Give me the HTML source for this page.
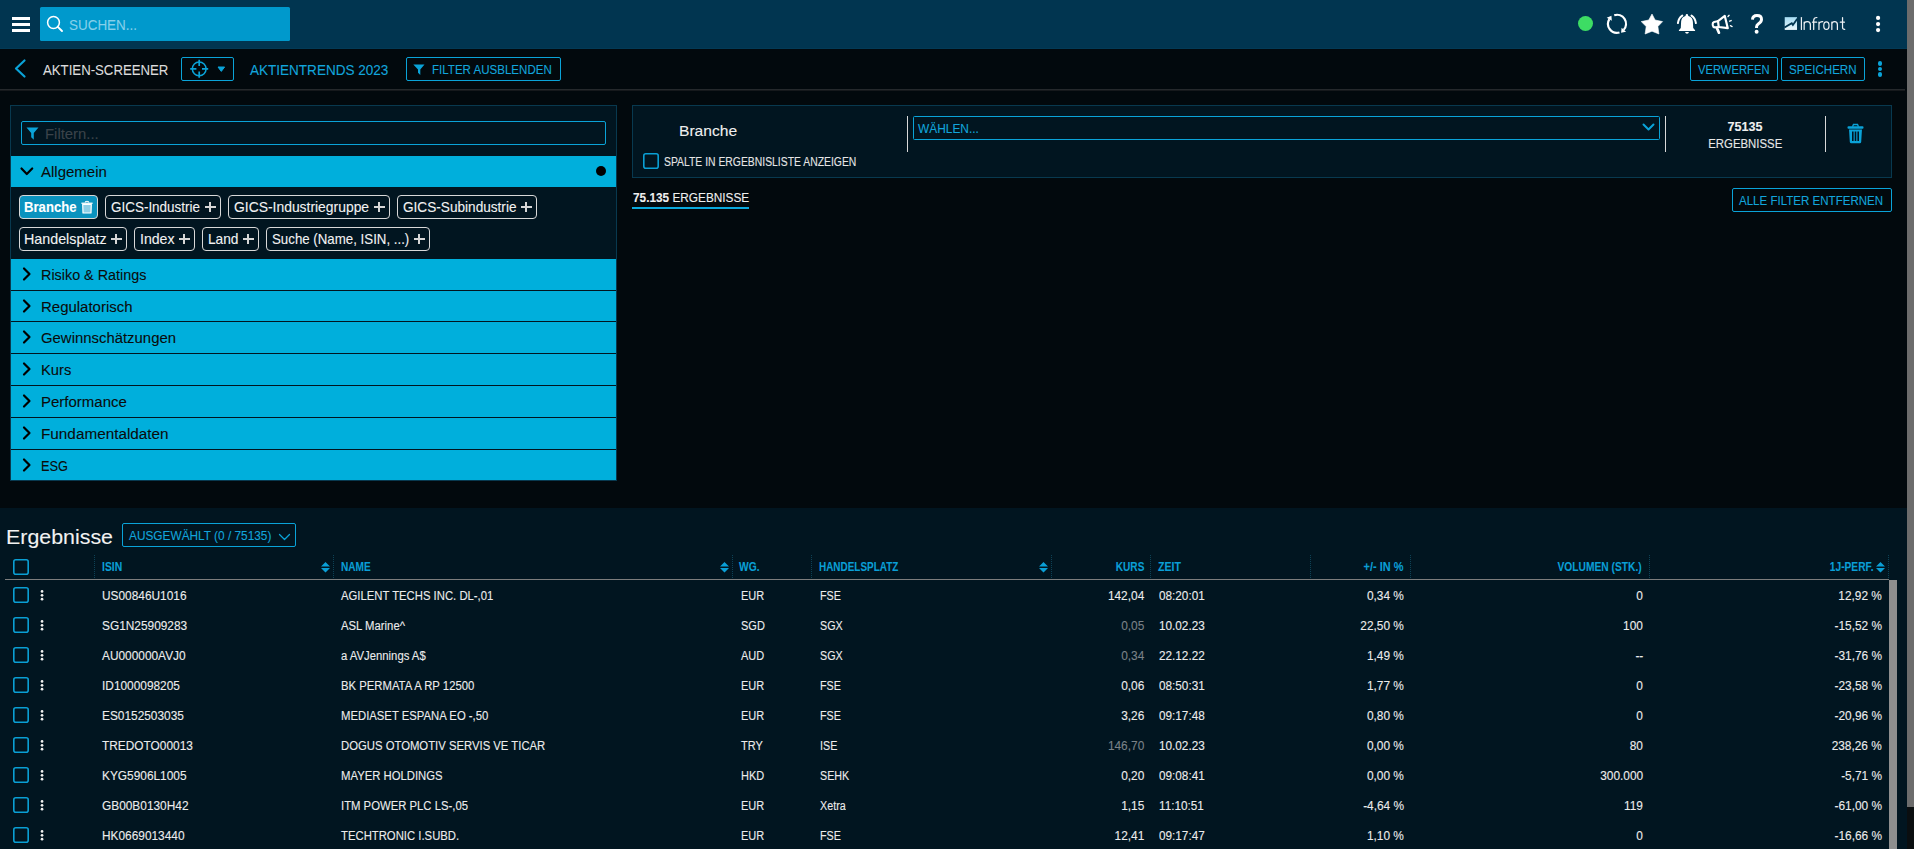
<!DOCTYPE html>
<html><head><meta charset="utf-8"><style>
html,body{margin:0;padding:0;}
body{width:1914px;height:849px;overflow:hidden;position:relative;background:#02090d;font-family:"Liberation Sans", sans-serif;}
.t{position:absolute;white-space:nowrap;-webkit-text-stroke:0.1px currentColor;}
svg{overflow:visible}
</style></head><body>
<div style="position:absolute;left:0px;top:0px;width:1907px;height:48px;background:#013550"></div>
<div style="position:absolute;left:0px;top:48px;width:1907px;height:1px;background:#033a56"></div>
<div style="position:absolute;left:12px;top:16.5px;width:18px;height:3px;background:#fff"></div>
<div style="position:absolute;left:12px;top:22.5px;width:18px;height:3px;background:#fff"></div>
<div style="position:absolute;left:12px;top:28.5px;width:18px;height:3px;background:#fff"></div>
<div style="position:absolute;left:40px;top:7px;width:250px;height:34px;background:#0099cc;border-radius:1.5px"></div>
<svg style="position:absolute;left:46px;top:15px" width="18" height="18" viewBox="0 0 18 18"><circle cx="7.5" cy="7.5" r="5.9" fill="none" stroke="#fff" stroke-width="1.5"/><line x1="11.8" y1="11.8" x2="16" y2="16" stroke="#fff" stroke-width="1.9" stroke-linecap="round"/></svg>
<div class="t" style="left:69.4px;transform-origin:left 13px;top:17.00px;font-size:16px;line-height:16px;color:#86d0ea;font-weight:400;transform:scale(0.8405,0.9167);">SUCHEN...</div>
<div style="position:absolute;left:1578px;top:16px;width:15px;height:15px;border-radius:50%;background:#3ddc64"></div>
<svg style="position:absolute;left:1606px;top:13px" width="22" height="22" viewBox="0 0 22 22"><path d="M8.22 2.29 A9.0 9.0 0 0 1 17.69 16.87 M13.48 19.50 A9.0 9.0 0 0 1 3.37 6.08" fill="none" stroke="#fff" stroke-width="2.2"/><path d="M15.08 19.77 L20.05 18.73 L15.59 14.72 Z M5.43 2.77 L0.72 4.66 L5.81 7.84 Z" fill="#fff"/></svg>
<svg style="position:absolute;left:1641px;top:14px" width="22" height="21" viewBox="0 0 22 21"><path d="M11 0 L14.1 6 L21.6 7.6 L16.9 12.55 L17.9 20 L11 17.2 L4.1 20 L5.2 12.55 L0.2 7.6 L7.76 6 Z" fill="#fff" stroke="#fff" stroke-width="0.6" stroke-linejoin="round"/></svg>
<svg style="position:absolute;left:1677px;top:13px" width="21" height="22" viewBox="0 0 21 22"><path d="M9.9 3 C6 3 4.3 5.6 4.1 9 L3.8 14.9 L1.9 17.3 L1.9 18 L18.1 18 L18.1 17.3 L16.2 14.9 L15.9 9 C15.7 5.6 14 3 9.9 3 Z" fill="#fff"/><path d="M8.7 4 L8.7 2.2 Q8.7 0.9 9.9 0.9 Q11.1 0.9 11.1 2.2 L11.1 4 Z" fill="#fff"/><path d="M8 19.1 L12 19.1 Q11.5 20.8 10 20.8 Q8.5 20.8 8 19.1 Z" fill="#fff"/><path d="M5.3 2.6 Q1.5 5.1 0.9 10.1 M14.5 2.6 Q18.3 5.1 18.9 10.1" fill="none" stroke="#fff" stroke-width="2" stroke-linecap="round"/></svg>
<svg style="position:absolute;left:1705px;top:8px" width="65" height="32" viewBox="0 0 1725 849"><g fill="none" stroke="#fff" stroke-linejoin="round" stroke-linecap="round"><path d="M345 345 L525 210 L605 535 L365 505 Z" stroke-width="58"/><path d="M330 350 L240 370 Q200 385 205 430 L212 470 Q222 520 270 515 L360 505" stroke-width="58"/><path d="M320 540 L370 655" stroke-width="72"/><path d="M610 225 L640 195 M655 350 L695 333 M675 470 L720 492" stroke-width="36"/><path d="M1260 310 Q1265 200 1380 200 Q1500 200 1500 300 Q1500 370 1420 420 Q1368 455 1368 500 L1368 530" stroke-width="78" stroke-linecap="butt"/></g><circle cx="1370" cy="628" r="52" fill="#fff"/></svg>
<svg style="position:absolute;left:1778px;top:10px" width="112" height="28" viewBox="0 0 1914 478"><defs><linearGradient id="lg" x1="0" y1="0" x2="0" y2="1"><stop offset="0" stop-color="#a6dcf3"/><stop offset="0.5" stop-color="#c5e8f7"/><stop offset="1" stop-color="#eef8fc"/></linearGradient></defs><rect x="115" y="122" width="210" height="218" fill="url(#lg)"/><path d="M110 300 L235 225 L255 255 L330 150" fill="none" stroke="#013550" stroke-width="32"/><g fill="none" stroke="#eef2f5" stroke-width="21" stroke-linecap="round"><path d="M400 128 L400 332"/><path d="M447 332 L447 205 M447 240 Q447 200 500 200 Q553 200 553 250 L553 332"/><path d="M610 332 L610 175 Q610 128 665 128 M590 208 L660 208"/><path d="M700 332 L700 205 M700 250 Q702 200 765 200"/><ellipse cx="827" cy="268" rx="45" ry="64"/><path d="M920 332 L920 205 M920 240 Q920 200 968 200 Q1015 200 1015 250 L1015 332"/><path d="M1103 128 L1103 300 Q1103 332 1140 332 M1065 208 L1135 208"/></g><circle cx="1710" cy="135" r="36" fill="#fff"/><circle cx="1710" cy="240" r="36" fill="#fff"/><circle cx="1710" cy="342" r="36" fill="#fff"/></svg>
<div style="position:absolute;left:0px;top:89px;width:1905px;height:1px;background:#25292c"></div>
<div style="position:absolute;left:0px;top:90px;width:1905px;height:1px;background:#16191c"></div>
<svg style="position:absolute;left:14px;top:59px" width="13" height="20" viewBox="0 0 13 20"><polyline points="10.5,1.5 2,9.5 10.5,17.5" fill="none" stroke="#0aa3d8" stroke-width="2.2" stroke-linecap="round" stroke-linejoin="round"/></svg>
<div class="t" style="left:43.3px;transform-origin:left 13px;top:62.00px;font-size:16px;line-height:16px;color:#dcdcdc;font-weight:400;transform:scale(0.8248,0.9167);">AKTIEN-SCREENER</div>
<div style="position:absolute;left:181px;top:57px;width:51px;height:22px;border:1px solid #0aa3d8;border-radius:2px"></div>
<svg style="position:absolute;left:189px;top:59px" width="21" height="20" viewBox="0 0 21 20"><circle cx="10.2" cy="9.8" r="6.9" fill="none" stroke="#0aa3d8" stroke-width="1.5"/><path d="M10.2 0.8 L10.2 7 M10.2 12.6 L10.2 18.8 M1.2 9.8 L7.4 9.8 M13 9.8 L19.2 9.8" stroke="#0aa3d8" stroke-width="1.7"/></svg>
<svg style="position:absolute;left:217px;top:66px" width="9" height="6" viewBox="0 0 9 6"><path d="M1 1 L7.6 1 L4.3 5.4 Z" fill="#0aa3d8" stroke="#0aa3d8" stroke-width="1" stroke-linejoin="round"/></svg>
<div class="t" style="left:250.3px;transform-origin:left 13px;top:62.00px;font-size:15.5px;line-height:15.5px;color:#12a5dc;font-weight:400;transform:scale(0.8726,1.0000);">AKTIENTRENDS 2023</div>
<div style="position:absolute;left:406px;top:57px;width:153px;height:22px;border:1px solid #0aa3d8;border-radius:2px"></div>
<svg style="position:absolute;left:413px;top:64px" width="12" height="12" viewBox="0 0 12 12"><path d="M0.3 0.5 L11.5 0.5 L7.3 5.6 L7.3 11 L5 8.8 L5 5.6 Z" fill="#0aa3d8"/></svg>
<div class="t" style="left:432.2px;transform-origin:left 11px;top:63.00px;font-size:13px;line-height:13px;color:#12a5dc;font-weight:400;transform:scale(0.8883,1.0000);">FILTER AUSBLENDEN</div>
<div style="position:absolute;left:1690px;top:57px;width:86px;height:22px;border:1px solid #0aa3d8;border-radius:2px"></div>
<div class="t" style="left:1697.7px;transform-origin:left 11px;top:63.00px;font-size:13px;line-height:13px;color:#12a5dc;font-weight:400;transform:scale(0.8632,1.0000);">VERWERFEN</div>
<div style="position:absolute;left:1781px;top:57px;width:82px;height:22px;border:1px solid #0aa3d8;border-radius:2px"></div>
<div class="t" style="left:1789px;transform-origin:left 11px;top:63.00px;font-size:13px;line-height:13px;color:#12a5dc;font-weight:400;transform:scale(0.8911,1.0000);">SPEICHERN</div>
<div style="position:absolute;left:1877.8px;top:61px;width:4.6px;height:4.6px;border-radius:50%;background:#0aa3d8"></div>
<div style="position:absolute;left:1877.8px;top:66.5px;width:4.6px;height:4.6px;border-radius:50%;background:#0aa3d8"></div>
<div style="position:absolute;left:1877.8px;top:72px;width:4.6px;height:4.6px;border-radius:50%;background:#0aa3d8"></div>
<div style="position:absolute;left:1907px;top:0px;width:7px;height:849px;background:#0a0e10"></div>
<div style="position:absolute;left:1907px;top:0px;width:7px;height:807px;background:#6c6c6c"></div>
<div style="position:absolute;left:10px;top:105px;width:605px;height:375px;background:#011520;border:1px solid #08394f;border-bottom:none"></div>
<div style="position:absolute;left:21px;top:121px;width:583px;height:22px;border:1px solid #0aa3d8;border-radius:2px"></div>
<svg style="position:absolute;left:26px;top:127px" width="13" height="13" viewBox="0 0 13 13"><path d="M0.5 0.5 L12.5 0.5 L7.8 6 L7.8 12.8 L5.2 10.3 L5.2 6 Z" fill="#0aa3d8"/></svg>
<div class="t" style="left:45px;transform-origin:left 13px;top:126.00px;font-size:16px;line-height:16px;color:#3b434a;font-weight:400;transform:scale(0.9291,0.9167);">Filtern...</div>
<div style="position:absolute;left:11px;top:156px;width:605px;height:31px;background:#00afdc"></div>
<svg style="position:absolute;left:20px;top:167px" width="14" height="10" viewBox="0 0 14 10"><polyline points="1.5,1.5 6.8,7 12.2,1.5" fill="none" stroke="#000" stroke-width="2.2" stroke-linecap="round" stroke-linejoin="round"/></svg>
<div class="t" style="left:40.5px;transform-origin:left 13px;top:164.00px;font-size:16px;line-height:16px;color:#0b0b0b;font-weight:400;transform:scale(0.9379,0.9167);">Allgemein</div>
<div style="position:absolute;left:596px;top:166px;width:10px;height:10px;border-radius:50%;background:#000"></div>
<div style="position:absolute;left:19px;top:195px;width:77px;height:22px;background:#0a93bf;border:1px solid #d8d8d8;border-radius:4px"></div>
<div class="t" style="left:24.4px;transform-origin:left 12px;top:200.00px;font-size:14.5px;line-height:14.5px;color:#ffffff;font-weight:700;transform:scale(0.9064,1.0000);">Branche</div>
<svg style="position:absolute;left:81px;top:200px" width="12" height="14" viewBox="0 0 12 14"><path d="M4.2 2.6 Q4.2 1.2 6 1.2 Q7.8 1.2 7.8 2.6" fill="none" stroke="#fff" stroke-width="1.1"/><rect x="0.4" y="2.6" width="11.2" height="1.3" fill="#fff"/><path d="M1.7 4.4 L10.3 4.4 L10 13 L2 13 Z" fill="#8fcfe6" stroke="#fff" stroke-width="1.2" stroke-linejoin="round"/></svg>
<div style="position:absolute;left:105px;top:195px;width:114px;height:22px;border:1px solid #d8d8d8;border-radius:4px"></div>
<div class="t" style="left:111px;transform-origin:left 12px;top:200.00px;font-size:14.5px;line-height:14.5px;color:#f2f2f2;font-weight:400;transform:scale(0.9280,1.0000);">GICS-Industrie</div>
<div style="position:absolute;left:205px;top:206.2px;width:10.5px;height:1.6px;background:#d6d6d6"></div>
<div style="position:absolute;left:209.45px;top:201.8px;width:1.6px;height:10.5px;background:#d6d6d6"></div>
<div style="position:absolute;left:228px;top:195px;width:160px;height:22px;border:1px solid #d8d8d8;border-radius:4px"></div>
<div class="t" style="left:233.8px;transform-origin:left 12px;top:200.00px;font-size:14.5px;line-height:14.5px;color:#f2f2f2;font-weight:400;transform:scale(0.9578,1.0000);">GICS-Industriegruppe</div>
<div style="position:absolute;left:374px;top:206.2px;width:10.5px;height:1.6px;background:#d6d6d6"></div>
<div style="position:absolute;left:378.45px;top:201.8px;width:1.6px;height:10.5px;background:#d6d6d6"></div>
<div style="position:absolute;left:397px;top:195px;width:138px;height:22px;border:1px solid #d8d8d8;border-radius:4px"></div>
<div class="t" style="left:402.5px;transform-origin:left 12px;top:200.00px;font-size:14.5px;line-height:14.5px;color:#f2f2f2;font-weight:400;transform:scale(0.9389,1.0000);">GICS-Subindustrie</div>
<div style="position:absolute;left:521px;top:206.2px;width:10.5px;height:1.6px;background:#d6d6d6"></div>
<div style="position:absolute;left:525.45px;top:201.8px;width:1.6px;height:10.5px;background:#d6d6d6"></div>
<div style="position:absolute;left:19px;top:227px;width:106px;height:22px;border:1px solid #d8d8d8;border-radius:4px"></div>
<div class="t" style="left:24.4px;transform-origin:left 12px;top:232.00px;font-size:14.5px;line-height:14.5px;color:#f2f2f2;font-weight:400;transform:scale(0.9853,1.0000);">Handelsplatz</div>
<div style="position:absolute;left:111px;top:238.2px;width:10.5px;height:1.6px;background:#d6d6d6"></div>
<div style="position:absolute;left:115.45px;top:233.8px;width:1.6px;height:10.5px;background:#d6d6d6"></div>
<div style="position:absolute;left:134px;top:227px;width:59px;height:22px;border:1px solid #d8d8d8;border-radius:4px"></div>
<div class="t" style="left:139.5px;transform-origin:left 12px;top:232.00px;font-size:14.5px;line-height:14.5px;color:#f2f2f2;font-weight:400;transform:scale(0.9723,1.0000);">Index</div>
<div style="position:absolute;left:179px;top:238.2px;width:10.5px;height:1.6px;background:#d6d6d6"></div>
<div style="position:absolute;left:183.45px;top:233.8px;width:1.6px;height:10.5px;background:#d6d6d6"></div>
<div style="position:absolute;left:202px;top:227px;width:55px;height:22px;border:1px solid #d8d8d8;border-radius:4px"></div>
<div class="t" style="left:207.5px;transform-origin:left 12px;top:232.00px;font-size:14.5px;line-height:14.5px;color:#f2f2f2;font-weight:400;transform:scale(0.9453,1.0000);">Land</div>
<div style="position:absolute;left:243px;top:238.2px;width:10.5px;height:1.6px;background:#d6d6d6"></div>
<div style="position:absolute;left:247.45px;top:233.8px;width:1.6px;height:10.5px;background:#d6d6d6"></div>
<div style="position:absolute;left:266px;top:227px;width:162px;height:22px;border:1px solid #d8d8d8;border-radius:4px"></div>
<div class="t" style="left:271.7px;transform-origin:left 12px;top:232.00px;font-size:14.5px;line-height:14.5px;color:#f2f2f2;font-weight:400;transform:scale(0.9160,1.0000);">Suche (Name, ISIN, ...)</div>
<div style="position:absolute;left:414px;top:238.2px;width:10.5px;height:1.6px;background:#d6d6d6"></div>
<div style="position:absolute;left:418.45px;top:233.8px;width:1.6px;height:10.5px;background:#d6d6d6"></div>
<div style="position:absolute;left:11px;top:259px;width:605px;height:31px;background:#00afdc"></div>
<svg style="position:absolute;left:22px;top:267px" width="10" height="14" viewBox="0 0 10 14"><polyline points="2,1.5 7.5,7 2,12.5" fill="none" stroke="#000" stroke-width="2.2" stroke-linecap="round" stroke-linejoin="round"/></svg>
<div class="t" style="left:40.5px;transform-origin:left 13px;top:267.00px;font-size:16px;line-height:16px;color:#0b0b0b;font-weight:400;transform:scale(0.8980,0.9167);">Risiko &amp; Ratings</div>
<div style="position:absolute;left:11px;top:291px;width:605px;height:30px;background:#00afdc"></div>
<svg style="position:absolute;left:22px;top:299px" width="10" height="14" viewBox="0 0 10 14"><polyline points="2,1.5 7.5,7 2,12.5" fill="none" stroke="#000" stroke-width="2.2" stroke-linecap="round" stroke-linejoin="round"/></svg>
<div class="t" style="left:40.5px;transform-origin:left 13px;top:299.00px;font-size:16px;line-height:16px;color:#0b0b0b;font-weight:400;transform:scale(0.9353,0.9167);">Regulatorisch</div>
<div style="position:absolute;left:11px;top:322px;width:605px;height:31px;background:#00afdc"></div>
<svg style="position:absolute;left:22px;top:330px" width="10" height="14" viewBox="0 0 10 14"><polyline points="2,1.5 7.5,7 2,12.5" fill="none" stroke="#000" stroke-width="2.2" stroke-linecap="round" stroke-linejoin="round"/></svg>
<div class="t" style="left:40.5px;transform-origin:left 13px;top:330.00px;font-size:16px;line-height:16px;color:#0b0b0b;font-weight:400;transform:scale(0.9311,0.9167);">Gewinnsch&auml;tzungen</div>
<div style="position:absolute;left:11px;top:354px;width:605px;height:31px;background:#00afdc"></div>
<svg style="position:absolute;left:22px;top:362px" width="10" height="14" viewBox="0 0 10 14"><polyline points="2,1.5 7.5,7 2,12.5" fill="none" stroke="#000" stroke-width="2.2" stroke-linecap="round" stroke-linejoin="round"/></svg>
<div class="t" style="left:40.5px;transform-origin:left 13px;top:362.00px;font-size:16px;line-height:16px;color:#0b0b0b;font-weight:400;transform:scale(0.9208,0.9167);">Kurs</div>
<div style="position:absolute;left:11px;top:386px;width:605px;height:31px;background:#00afdc"></div>
<svg style="position:absolute;left:22px;top:394px" width="10" height="14" viewBox="0 0 10 14"><polyline points="2,1.5 7.5,7 2,12.5" fill="none" stroke="#000" stroke-width="2.2" stroke-linecap="round" stroke-linejoin="round"/></svg>
<div class="t" style="left:40.5px;transform-origin:left 13px;top:394.00px;font-size:16px;line-height:16px;color:#0b0b0b;font-weight:400;transform:scale(0.9367,0.9167);">Performance</div>
<div style="position:absolute;left:11px;top:418px;width:605px;height:31px;background:#00afdc"></div>
<svg style="position:absolute;left:22px;top:426px" width="10" height="14" viewBox="0 0 10 14"><polyline points="2,1.5 7.5,7 2,12.5" fill="none" stroke="#000" stroke-width="2.2" stroke-linecap="round" stroke-linejoin="round"/></svg>
<div class="t" style="left:40.5px;transform-origin:left 13px;top:426.00px;font-size:16px;line-height:16px;color:#0b0b0b;font-weight:400;transform:scale(0.9563,0.9167);">Fundamentaldaten</div>
<div style="position:absolute;left:11px;top:450px;width:605px;height:30px;background:#00afdc"></div>
<svg style="position:absolute;left:22px;top:458px" width="10" height="14" viewBox="0 0 10 14"><polyline points="2,1.5 7.5,7 2,12.5" fill="none" stroke="#000" stroke-width="2.2" stroke-linecap="round" stroke-linejoin="round"/></svg>
<div class="t" style="left:40.5px;transform-origin:left 13px;top:458.00px;font-size:16px;line-height:16px;color:#0b0b0b;font-weight:400;transform:scale(0.7989,0.9167);">ESG</div>
<div style="position:absolute;left:10px;top:480px;width:607px;height:1px;background:#08394f"></div>
<div style="position:absolute;left:632px;top:105px;width:1258px;height:71px;background:#011520;border:1px solid #08394f"></div>
<div class="t" style="left:678.8px;transform-origin:left 14px;top:122.00px;font-size:16.5px;line-height:16.5px;color:#efefef;font-weight:400;transform:scale(0.9468,0.9417);">Branche</div>
<svg style="position:absolute;left:643px;top:153px" width="16" height="16" viewBox="0 0 16 16"><rect x="0.8" y="0.8" width="14.4" height="14.4" rx="2" fill="none" stroke="#0a9fd4" stroke-width="1.6"/></svg>
<div class="t" style="left:663.5px;transform-origin:left 10px;top:156.00px;font-size:12.5px;line-height:12.5px;color:#e6e6e6;font-weight:400;transform:scale(0.8305,1.0000);">SPALTE IN ERGEBNISLISTE ANZEIGEN</div>
<div style="position:absolute;left:907px;top:116px;width:1px;height:36px;background:#d8d8d8"></div>
<div style="position:absolute;left:913px;top:116px;width:745px;height:22px;border:1px solid #0aa3d8;border-radius:1.5px"></div>
<div class="t" style="left:918.3px;transform-origin:left 11px;top:122.00px;font-size:13px;line-height:13px;color:#12a5dc;font-weight:400;transform:scale(0.9162,1.0000);">W&Auml;HLEN...</div>
<svg style="position:absolute;left:1642px;top:123px" width="13" height="9" viewBox="0 0 13 9"><polyline points="1.5,1.5 6.5,6.5 11.5,1.5" fill="none" stroke="#0aa3d8" stroke-width="2" stroke-linecap="round" stroke-linejoin="round"/></svg>
<div style="position:absolute;left:1665px;top:116px;width:1px;height:36px;background:#d8d8d8"></div>
<div class="t" style="left:1727.42px;transform-origin:center 11px;top:120.00px;font-size:13px;line-height:13px;color:#f0f0f0;font-weight:700;transform:scale(0.9680,1.0000);">75135</div>
<div class="t" style="left:1702.73px;transform-origin:center 11px;top:137.00px;font-size:13px;line-height:13px;color:#e8e8e8;font-weight:400;transform:scale(0.8754,1.0000);">ERGEBNISSE</div>
<div style="position:absolute;left:1825px;top:116px;width:1px;height:36px;background:#d8d8d8"></div>
<svg style="position:absolute;left:1847px;top:124px" width="17" height="20" viewBox="0 0 17 20"><rect x="0.5" y="2.3" width="16" height="2.4" rx="1" fill="#0aa3d8"/><path d="M5.5 2.8 L6.5 0.5 L10.5 0.5 L11.5 2.8" fill="none" stroke="#0aa3d8" stroke-width="1.4"/><path d="M2 5.6 L15 5.6 L14.2 18 Q14 19.3 12.8 19.3 L4.2 19.3 Q3 19.3 2.8 18 Z" fill="#0aa3d8"/><rect x="5" y="7.5" width="1.6" height="9.5" fill="#011520"/><rect x="7.7" y="7.5" width="1.6" height="9.5" fill="#011520"/><rect x="10.4" y="7.5" width="1.6" height="9.5" fill="#011520"/></svg>
<div class="t" style="left:632.5px;transform-origin:left 11px;top:191.00px;font-size:13.5px;line-height:13.5px;color:#f0f0f0;font-weight:400;transform:scale(0.8748,1.0000);"><b>75.135</b> ERGEBNISSE</div>
<div style="position:absolute;left:632px;top:207px;width:117px;height:2px;background:#0aa8dc"></div>
<div style="position:absolute;left:1732px;top:188px;width:158px;height:22px;border:1px solid #0aa3d8;border-radius:2px"></div>
<div class="t" style="left:1739.4px;transform-origin:left 11px;top:194.00px;font-size:13px;line-height:13px;color:#12a5dc;font-weight:400;transform:scale(0.8879,1.0000);">ALLE FILTER ENTFERNEN</div>
<div style="position:absolute;left:0px;top:508px;width:1907px;height:341px;background:#011520"></div>
<div class="t" style="left:6px;transform-origin:left 18px;top:526.00px;font-size:21px;line-height:21px;color:#f2f2f2;font-weight:400;transform:scale(1.0184,1.0000);">Ergebnisse</div>
<div style="position:absolute;left:122px;top:523px;width:172px;height:22px;border:1px solid #0aa3d8;border-radius:2px"></div>
<div class="t" style="left:129px;transform-origin:left 11px;top:529.00px;font-size:13px;line-height:13px;color:#12a5dc;font-weight:400;transform:scale(0.9110,1.0000);">AUSGEW&Auml;HLT (0 / 75135)</div>
<svg style="position:absolute;left:278px;top:533px" width="13" height="8" viewBox="0 0 13 8"><polyline points="1.5,1.5 6.5,6.5 11.5,1.5" fill="none" stroke="#0aa3d8" stroke-width="1.3" stroke-linecap="round" stroke-linejoin="round"/></svg>
<svg style="position:absolute;left:13px;top:559px" width="16" height="16" viewBox="0 0 16 16"><rect x="0.8" y="0.8" width="14.4" height="14.4" rx="2" fill="none" stroke="#0a9fd4" stroke-width="1.6"/></svg>
<div style="position:absolute;left:94px;top:555px;width:0px;height:23px;border-left:1px dotted #0d4256"></div>
<div style="position:absolute;left:333px;top:555px;width:0px;height:23px;border-left:1px dotted #0d4256"></div>
<div style="position:absolute;left:732px;top:555px;width:0px;height:23px;border-left:1px dotted #0d4256"></div>
<div style="position:absolute;left:811px;top:555px;width:0px;height:23px;border-left:1px dotted #0d4256"></div>
<div style="position:absolute;left:1051px;top:555px;width:0px;height:23px;border-left:1px dotted #0d4256"></div>
<div style="position:absolute;left:1150px;top:555px;width:0px;height:23px;border-left:1px dotted #0d4256"></div>
<div style="position:absolute;left:1310px;top:555px;width:0px;height:23px;border-left:1px dotted #0d4256"></div>
<div style="position:absolute;left:1410px;top:555px;width:0px;height:23px;border-left:1px dotted #0d4256"></div>
<div style="position:absolute;left:1649px;top:555px;width:0px;height:23px;border-left:1px dotted #0d4256"></div>
<div style="position:absolute;left:1888px;top:555px;width:0px;height:23px;border-left:1px dotted #0d4256"></div>
<svg style="position:absolute;left:321px;top:562px" width="9" height="11" viewBox="0 0 9 11"><path d="M4.5 0 L9 4.6 L0 4.6 Z M0 6 L9 6 L4.5 10.6 Z" fill="#0a9fd6"/></svg>
<svg style="position:absolute;left:720px;top:562px" width="9" height="11" viewBox="0 0 9 11"><path d="M4.5 0 L9 4.6 L0 4.6 Z M0 6 L9 6 L4.5 10.6 Z" fill="#0a9fd6"/></svg>
<svg style="position:absolute;left:1039px;top:562px" width="9" height="11" viewBox="0 0 9 11"><path d="M4.5 0 L9 4.6 L0 4.6 Z M0 6 L9 6 L4.5 10.6 Z" fill="#0a9fd6"/></svg>
<svg style="position:absolute;left:1876px;top:562px" width="9" height="11" viewBox="0 0 9 11"><path d="M4.5 0 L9 4.6 L0 4.6 Z M0 6 L9 6 L4.5 10.6 Z" fill="#0a9fd6"/></svg>
<div class="t" style="left:101.8px;transform-origin:left 10px;top:561.00px;font-size:12.5px;line-height:12.5px;color:#0a9fd6;font-weight:700;transform:scale(0.8308,1.0000);">ISIN</div>
<div class="t" style="left:340.6px;transform-origin:left 10px;top:561.00px;font-size:12.5px;line-height:12.5px;color:#0a9fd6;font-weight:700;transform:scale(0.8095,1.0000);">NAME</div>
<div class="t" style="left:738.9px;transform-origin:left 10px;top:561.00px;font-size:12.5px;line-height:12.5px;color:#0a9fd6;font-weight:700;transform:scale(0.8200,1.0000);">WG.</div>
<div class="t" style="left:819.1px;transform-origin:left 10px;top:561.00px;font-size:12.5px;line-height:12.5px;color:#0a9fd6;font-weight:700;transform:scale(0.7959,1.0000);">HANDELSPLATZ</div>
<div class="t" style="left:1108.88px;transform-origin:right 10px;top:561.00px;font-size:12.5px;line-height:12.5px;color:#0a9fd6;font-weight:700;transform:scale(0.8102,1.0000);">KURS</div>
<div class="t" style="left:1157.7px;transform-origin:left 10px;top:561.00px;font-size:12.5px;line-height:12.5px;color:#0a9fd6;font-weight:700;transform:scale(0.8489,1.0000);">ZEIT</div>
<div class="t" style="left:1358.20px;transform-origin:right 10px;top:561.00px;font-size:12.5px;line-height:12.5px;color:#0a9fd6;font-weight:700;transform:scale(0.8791,1.0000);">+/- IN %</div>
<div class="t" style="left:1539.42px;transform-origin:right 10px;top:561.00px;font-size:12.5px;line-height:12.5px;color:#0a9fd6;font-weight:700;transform:scale(0.8212,1.0000);">VOLUMEN (STK.)</div>
<div class="t" style="left:1819.70px;transform-origin:right 10px;top:561.00px;font-size:12.5px;line-height:12.5px;color:#0a9fd6;font-weight:700;transform:scale(0.8168,1.0000);">1J-PERF.</div>
<div style="position:absolute;left:5px;top:579px;width:1884px;height:1px;background:#7d7d7d"></div>
<div style="position:absolute;left:1889px;top:580px;width:8px;height:269px;background:#8e8e8e"></div>
<svg style="position:absolute;left:13px;top:587px" width="16" height="16" viewBox="0 0 16 16"><rect x="0.8" y="0.8" width="14.4" height="14.4" rx="2" fill="none" stroke="#0a9fd4" stroke-width="1.6"/></svg>
<svg style="position:absolute;left:39px;top:587px" width="6" height="16" viewBox="0 0 6 16"><circle cx="3.05" cy="4.4" r="1.35" fill="#f2f2f2"/><circle cx="3.05" cy="8.3" r="1.35" fill="#f2f2f2"/><circle cx="3.05" cy="12.2" r="1.35" fill="#f2f2f2"/></svg>
<div class="t" style="left:102px;transform-origin:left 10px;top:590.00px;font-size:12.5px;line-height:12.5px;color:#ececec;font-weight:400;transform:scale(0.9500,1.0000);">US00846U1016</div>
<div class="t" style="left:341px;transform-origin:left 10px;top:590.00px;font-size:12.5px;line-height:12.5px;color:#ececec;font-weight:400;transform:scale(0.9050,1.0000);">AGILENT TECHS INC. DL-,01</div>
<div class="t" style="left:740.5px;transform-origin:left 10px;top:590.00px;font-size:12.5px;line-height:12.5px;color:#ececec;font-weight:400;transform:scale(0.8800,1.0000);">EUR</div>
<div class="t" style="left:820px;transform-origin:left 10px;top:590.00px;font-size:12.5px;line-height:12.5px;color:#ececec;font-weight:400;transform:scale(0.8600,1.0000);">FSE</div>
<div class="t" style="left:1105.97px;transform-origin:right 10px;top:590.00px;font-size:12.5px;line-height:12.5px;color:#ececec;font-weight:400;transform:scale(0.9500,1.0000);">142,04</div>
<div class="t" style="left:1158.5px;transform-origin:left 10px;top:590.00px;font-size:12.5px;line-height:12.5px;color:#ececec;font-weight:400;transform:scale(0.9400,1.0000);">08:20:01</div>
<div class="t" style="left:1365.08px;transform-origin:right 10px;top:590.00px;font-size:12.5px;line-height:12.5px;color:#ececec;font-weight:400;transform:scale(0.9500,1.0000);">0,34 %</div>
<div class="t" style="left:1636.05px;transform-origin:right 10px;top:590.00px;font-size:12.5px;line-height:12.5px;color:#ececec;font-weight:400;transform:scale(0.9500,1.0000);">0</div>
<div class="t" style="left:1836.42px;transform-origin:right 10px;top:590.00px;font-size:12.5px;line-height:12.5px;color:#ececec;font-weight:400;transform:scale(0.9500,1.0000);">12,92 %</div>
<svg style="position:absolute;left:13px;top:617px" width="16" height="16" viewBox="0 0 16 16"><rect x="0.8" y="0.8" width="14.4" height="14.4" rx="2" fill="none" stroke="#0a9fd4" stroke-width="1.6"/></svg>
<svg style="position:absolute;left:39px;top:617px" width="6" height="16" viewBox="0 0 6 16"><circle cx="3.05" cy="4.4" r="1.35" fill="#f2f2f2"/><circle cx="3.05" cy="8.3" r="1.35" fill="#f2f2f2"/><circle cx="3.05" cy="12.2" r="1.35" fill="#f2f2f2"/></svg>
<div class="t" style="left:102px;transform-origin:left 10px;top:620.00px;font-size:12.5px;line-height:12.5px;color:#ececec;font-weight:400;transform:scale(0.9500,1.0000);">SG1N25909283</div>
<div class="t" style="left:341px;transform-origin:left 10px;top:620.00px;font-size:12.5px;line-height:12.5px;color:#ececec;font-weight:400;transform:scale(0.9050,1.0000);">ASL Marine^</div>
<div class="t" style="left:740.5px;transform-origin:left 10px;top:620.00px;font-size:12.5px;line-height:12.5px;color:#ececec;font-weight:400;transform:scale(0.8800,1.0000);">SGD</div>
<div class="t" style="left:820px;transform-origin:left 10px;top:620.00px;font-size:12.5px;line-height:12.5px;color:#ececec;font-weight:400;transform:scale(0.8600,1.0000);">SGX</div>
<div class="t" style="left:1119.86px;transform-origin:right 10px;top:620.00px;font-size:12.5px;line-height:12.5px;color:#7b8288;font-weight:400;transform:scale(0.9500,1.0000);">0,05</div>
<div class="t" style="left:1158.5px;transform-origin:left 10px;top:620.00px;font-size:12.5px;line-height:12.5px;color:#ececec;font-weight:400;transform:scale(0.9400,1.0000);">10.02.23</div>
<div class="t" style="left:1358.12px;transform-origin:right 10px;top:620.00px;font-size:12.5px;line-height:12.5px;color:#ececec;font-weight:400;transform:scale(0.9500,1.0000);">22,50 %</div>
<div class="t" style="left:1622.14px;transform-origin:right 10px;top:620.00px;font-size:12.5px;line-height:12.5px;color:#ececec;font-weight:400;transform:scale(0.9500,1.0000);">100</div>
<div class="t" style="left:1832.27px;transform-origin:right 10px;top:620.00px;font-size:12.5px;line-height:12.5px;color:#ececec;font-weight:400;transform:scale(0.9500,1.0000);">-15,52 %</div>
<svg style="position:absolute;left:13px;top:647px" width="16" height="16" viewBox="0 0 16 16"><rect x="0.8" y="0.8" width="14.4" height="14.4" rx="2" fill="none" stroke="#0a9fd4" stroke-width="1.6"/></svg>
<svg style="position:absolute;left:39px;top:647px" width="6" height="16" viewBox="0 0 6 16"><circle cx="3.05" cy="4.4" r="1.35" fill="#f2f2f2"/><circle cx="3.05" cy="8.3" r="1.35" fill="#f2f2f2"/><circle cx="3.05" cy="12.2" r="1.35" fill="#f2f2f2"/></svg>
<div class="t" style="left:102px;transform-origin:left 10px;top:650.00px;font-size:12.5px;line-height:12.5px;color:#ececec;font-weight:400;transform:scale(0.9500,1.0000);">AU000000AVJ0</div>
<div class="t" style="left:341px;transform-origin:left 10px;top:650.00px;font-size:12.5px;line-height:12.5px;color:#ececec;font-weight:400;transform:scale(0.9050,1.0000);">a AVJennings A$</div>
<div class="t" style="left:740.5px;transform-origin:left 10px;top:650.00px;font-size:12.5px;line-height:12.5px;color:#ececec;font-weight:400;transform:scale(0.8800,1.0000);">AUD</div>
<div class="t" style="left:820px;transform-origin:left 10px;top:650.00px;font-size:12.5px;line-height:12.5px;color:#ececec;font-weight:400;transform:scale(0.8600,1.0000);">SGX</div>
<div class="t" style="left:1119.86px;transform-origin:right 10px;top:650.00px;font-size:12.5px;line-height:12.5px;color:#7b8288;font-weight:400;transform:scale(0.9500,1.0000);">0,34</div>
<div class="t" style="left:1158.5px;transform-origin:left 10px;top:650.00px;font-size:12.5px;line-height:12.5px;color:#ececec;font-weight:400;transform:scale(0.9400,1.0000);">22.12.22</div>
<div class="t" style="left:1365.08px;transform-origin:right 10px;top:650.00px;font-size:12.5px;line-height:12.5px;color:#ececec;font-weight:400;transform:scale(0.9500,1.0000);">1,49 %</div>
<div class="t" style="left:1634.67px;transform-origin:right 10px;top:650.00px;font-size:12.5px;line-height:12.5px;color:#ececec;font-weight:400;transform:scale(0.9500,1.0000);">--</div>
<div class="t" style="left:1832.27px;transform-origin:right 10px;top:650.00px;font-size:12.5px;line-height:12.5px;color:#ececec;font-weight:400;transform:scale(0.9500,1.0000);">-31,76 %</div>
<svg style="position:absolute;left:13px;top:677px" width="16" height="16" viewBox="0 0 16 16"><rect x="0.8" y="0.8" width="14.4" height="14.4" rx="2" fill="none" stroke="#0a9fd4" stroke-width="1.6"/></svg>
<svg style="position:absolute;left:39px;top:677px" width="6" height="16" viewBox="0 0 6 16"><circle cx="3.05" cy="4.4" r="1.35" fill="#f2f2f2"/><circle cx="3.05" cy="8.3" r="1.35" fill="#f2f2f2"/><circle cx="3.05" cy="12.2" r="1.35" fill="#f2f2f2"/></svg>
<div class="t" style="left:102px;transform-origin:left 10px;top:680.00px;font-size:12.5px;line-height:12.5px;color:#ececec;font-weight:400;transform:scale(0.9500,1.0000);">ID1000098205</div>
<div class="t" style="left:341px;transform-origin:left 10px;top:680.00px;font-size:12.5px;line-height:12.5px;color:#ececec;font-weight:400;transform:scale(0.9050,1.0000);">BK PERMATA A RP 12500</div>
<div class="t" style="left:740.5px;transform-origin:left 10px;top:680.00px;font-size:12.5px;line-height:12.5px;color:#ececec;font-weight:400;transform:scale(0.8800,1.0000);">EUR</div>
<div class="t" style="left:820px;transform-origin:left 10px;top:680.00px;font-size:12.5px;line-height:12.5px;color:#ececec;font-weight:400;transform:scale(0.8600,1.0000);">FSE</div>
<div class="t" style="left:1119.86px;transform-origin:right 10px;top:680.00px;font-size:12.5px;line-height:12.5px;color:#ececec;font-weight:400;transform:scale(0.9500,1.0000);">0,06</div>
<div class="t" style="left:1158.5px;transform-origin:left 10px;top:680.00px;font-size:12.5px;line-height:12.5px;color:#ececec;font-weight:400;transform:scale(0.9400,1.0000);">08:50:31</div>
<div class="t" style="left:1365.08px;transform-origin:right 10px;top:680.00px;font-size:12.5px;line-height:12.5px;color:#ececec;font-weight:400;transform:scale(0.9500,1.0000);">1,77 %</div>
<div class="t" style="left:1636.05px;transform-origin:right 10px;top:680.00px;font-size:12.5px;line-height:12.5px;color:#ececec;font-weight:400;transform:scale(0.9500,1.0000);">0</div>
<div class="t" style="left:1832.27px;transform-origin:right 10px;top:680.00px;font-size:12.5px;line-height:12.5px;color:#ececec;font-weight:400;transform:scale(0.9500,1.0000);">-23,58 %</div>
<svg style="position:absolute;left:13px;top:707px" width="16" height="16" viewBox="0 0 16 16"><rect x="0.8" y="0.8" width="14.4" height="14.4" rx="2" fill="none" stroke="#0a9fd4" stroke-width="1.6"/></svg>
<svg style="position:absolute;left:39px;top:707px" width="6" height="16" viewBox="0 0 6 16"><circle cx="3.05" cy="4.4" r="1.35" fill="#f2f2f2"/><circle cx="3.05" cy="8.3" r="1.35" fill="#f2f2f2"/><circle cx="3.05" cy="12.2" r="1.35" fill="#f2f2f2"/></svg>
<div class="t" style="left:102px;transform-origin:left 10px;top:710.00px;font-size:12.5px;line-height:12.5px;color:#ececec;font-weight:400;transform:scale(0.9500,1.0000);">ES0152503035</div>
<div class="t" style="left:341px;transform-origin:left 10px;top:710.00px;font-size:12.5px;line-height:12.5px;color:#ececec;font-weight:400;transform:scale(0.9050,1.0000);">MEDIASET ESPANA EO -,50</div>
<div class="t" style="left:740.5px;transform-origin:left 10px;top:710.00px;font-size:12.5px;line-height:12.5px;color:#ececec;font-weight:400;transform:scale(0.8800,1.0000);">EUR</div>
<div class="t" style="left:820px;transform-origin:left 10px;top:710.00px;font-size:12.5px;line-height:12.5px;color:#ececec;font-weight:400;transform:scale(0.8600,1.0000);">FSE</div>
<div class="t" style="left:1119.86px;transform-origin:right 10px;top:710.00px;font-size:12.5px;line-height:12.5px;color:#ececec;font-weight:400;transform:scale(0.9500,1.0000);">3,26</div>
<div class="t" style="left:1158.5px;transform-origin:left 10px;top:710.00px;font-size:12.5px;line-height:12.5px;color:#ececec;font-weight:400;transform:scale(0.9400,1.0000);">09:17:48</div>
<div class="t" style="left:1365.08px;transform-origin:right 10px;top:710.00px;font-size:12.5px;line-height:12.5px;color:#ececec;font-weight:400;transform:scale(0.9500,1.0000);">0,80 %</div>
<div class="t" style="left:1636.05px;transform-origin:right 10px;top:710.00px;font-size:12.5px;line-height:12.5px;color:#ececec;font-weight:400;transform:scale(0.9500,1.0000);">0</div>
<div class="t" style="left:1832.27px;transform-origin:right 10px;top:710.00px;font-size:12.5px;line-height:12.5px;color:#ececec;font-weight:400;transform:scale(0.9500,1.0000);">-20,96 %</div>
<svg style="position:absolute;left:13px;top:737px" width="16" height="16" viewBox="0 0 16 16"><rect x="0.8" y="0.8" width="14.4" height="14.4" rx="2" fill="none" stroke="#0a9fd4" stroke-width="1.6"/></svg>
<svg style="position:absolute;left:39px;top:737px" width="6" height="16" viewBox="0 0 6 16"><circle cx="3.05" cy="4.4" r="1.35" fill="#f2f2f2"/><circle cx="3.05" cy="8.3" r="1.35" fill="#f2f2f2"/><circle cx="3.05" cy="12.2" r="1.35" fill="#f2f2f2"/></svg>
<div class="t" style="left:102px;transform-origin:left 10px;top:740.00px;font-size:12.5px;line-height:12.5px;color:#ececec;font-weight:400;transform:scale(0.9500,1.0000);">TREDOTO00013</div>
<div class="t" style="left:341px;transform-origin:left 10px;top:740.00px;font-size:12.5px;line-height:12.5px;color:#ececec;font-weight:400;transform:scale(0.9050,1.0000);">DOGUS OTOMOTIV SERVIS VE TICAR</div>
<div class="t" style="left:740.5px;transform-origin:left 10px;top:740.00px;font-size:12.5px;line-height:12.5px;color:#ececec;font-weight:400;transform:scale(0.8800,1.0000);">TRY</div>
<div class="t" style="left:820px;transform-origin:left 10px;top:740.00px;font-size:12.5px;line-height:12.5px;color:#ececec;font-weight:400;transform:scale(0.8600,1.0000);">ISE</div>
<div class="t" style="left:1105.97px;transform-origin:right 10px;top:740.00px;font-size:12.5px;line-height:12.5px;color:#7b8288;font-weight:400;transform:scale(0.9500,1.0000);">146,70</div>
<div class="t" style="left:1158.5px;transform-origin:left 10px;top:740.00px;font-size:12.5px;line-height:12.5px;color:#ececec;font-weight:400;transform:scale(0.9400,1.0000);">10.02.23</div>
<div class="t" style="left:1365.08px;transform-origin:right 10px;top:740.00px;font-size:12.5px;line-height:12.5px;color:#ececec;font-weight:400;transform:scale(0.9500,1.0000);">0,00 %</div>
<div class="t" style="left:1629.09px;transform-origin:right 10px;top:740.00px;font-size:12.5px;line-height:12.5px;color:#ececec;font-weight:400;transform:scale(0.9500,1.0000);">80</div>
<div class="t" style="left:1829.47px;transform-origin:right 10px;top:740.00px;font-size:12.5px;line-height:12.5px;color:#ececec;font-weight:400;transform:scale(0.9500,1.0000);">238,26 %</div>
<svg style="position:absolute;left:13px;top:767px" width="16" height="16" viewBox="0 0 16 16"><rect x="0.8" y="0.8" width="14.4" height="14.4" rx="2" fill="none" stroke="#0a9fd4" stroke-width="1.6"/></svg>
<svg style="position:absolute;left:39px;top:767px" width="6" height="16" viewBox="0 0 6 16"><circle cx="3.05" cy="4.4" r="1.35" fill="#f2f2f2"/><circle cx="3.05" cy="8.3" r="1.35" fill="#f2f2f2"/><circle cx="3.05" cy="12.2" r="1.35" fill="#f2f2f2"/></svg>
<div class="t" style="left:102px;transform-origin:left 10px;top:770.00px;font-size:12.5px;line-height:12.5px;color:#ececec;font-weight:400;transform:scale(0.9500,1.0000);">KYG5906L1005</div>
<div class="t" style="left:341px;transform-origin:left 10px;top:770.00px;font-size:12.5px;line-height:12.5px;color:#ececec;font-weight:400;transform:scale(0.9050,1.0000);">MAYER HOLDINGS</div>
<div class="t" style="left:740.5px;transform-origin:left 10px;top:770.00px;font-size:12.5px;line-height:12.5px;color:#ececec;font-weight:400;transform:scale(0.8800,1.0000);">HKD</div>
<div class="t" style="left:820px;transform-origin:left 10px;top:770.00px;font-size:12.5px;line-height:12.5px;color:#ececec;font-weight:400;transform:scale(0.8600,1.0000);">SEHK</div>
<div class="t" style="left:1119.86px;transform-origin:right 10px;top:770.00px;font-size:12.5px;line-height:12.5px;color:#ececec;font-weight:400;transform:scale(0.9500,1.0000);">0,20</div>
<div class="t" style="left:1158.5px;transform-origin:left 10px;top:770.00px;font-size:12.5px;line-height:12.5px;color:#ececec;font-weight:400;transform:scale(0.9400,1.0000);">09:08:41</div>
<div class="t" style="left:1365.08px;transform-origin:right 10px;top:770.00px;font-size:12.5px;line-height:12.5px;color:#ececec;font-weight:400;transform:scale(0.9500,1.0000);">0,00 %</div>
<div class="t" style="left:1597.81px;transform-origin:right 10px;top:770.00px;font-size:12.5px;line-height:12.5px;color:#ececec;font-weight:400;transform:scale(0.9500,1.0000);">300.000</div>
<div class="t" style="left:1839.21px;transform-origin:right 10px;top:770.00px;font-size:12.5px;line-height:12.5px;color:#ececec;font-weight:400;transform:scale(0.9500,1.0000);">-5,71 %</div>
<svg style="position:absolute;left:13px;top:797px" width="16" height="16" viewBox="0 0 16 16"><rect x="0.8" y="0.8" width="14.4" height="14.4" rx="2" fill="none" stroke="#0a9fd4" stroke-width="1.6"/></svg>
<svg style="position:absolute;left:39px;top:797px" width="6" height="16" viewBox="0 0 6 16"><circle cx="3.05" cy="4.4" r="1.35" fill="#f2f2f2"/><circle cx="3.05" cy="8.3" r="1.35" fill="#f2f2f2"/><circle cx="3.05" cy="12.2" r="1.35" fill="#f2f2f2"/></svg>
<div class="t" style="left:102px;transform-origin:left 10px;top:800.00px;font-size:12.5px;line-height:12.5px;color:#ececec;font-weight:400;transform:scale(0.9500,1.0000);">GB00B0130H42</div>
<div class="t" style="left:341px;transform-origin:left 10px;top:800.00px;font-size:12.5px;line-height:12.5px;color:#ececec;font-weight:400;transform:scale(0.9050,1.0000);">ITM POWER PLC LS-,05</div>
<div class="t" style="left:740.5px;transform-origin:left 10px;top:800.00px;font-size:12.5px;line-height:12.5px;color:#ececec;font-weight:400;transform:scale(0.8800,1.0000);">EUR</div>
<div class="t" style="left:820px;transform-origin:left 10px;top:800.00px;font-size:12.5px;line-height:12.5px;color:#ececec;font-weight:400;transform:scale(0.8600,1.0000);">Xetra</div>
<div class="t" style="left:1119.86px;transform-origin:right 10px;top:800.00px;font-size:12.5px;line-height:12.5px;color:#ececec;font-weight:400;transform:scale(0.9500,1.0000);">1,15</div>
<div class="t" style="left:1158.5px;transform-origin:left 10px;top:800.00px;font-size:12.5px;line-height:12.5px;color:#ececec;font-weight:400;transform:scale(0.9400,1.0000);">11:10:51</div>
<div class="t" style="left:1360.91px;transform-origin:right 10px;top:800.00px;font-size:12.5px;line-height:12.5px;color:#ececec;font-weight:400;transform:scale(0.9500,1.0000);">-4,64 %</div>
<div class="t" style="left:1623.06px;transform-origin:right 10px;top:800.00px;font-size:12.5px;line-height:12.5px;color:#ececec;font-weight:400;transform:scale(0.9500,1.0000);">119</div>
<div class="t" style="left:1832.27px;transform-origin:right 10px;top:800.00px;font-size:12.5px;line-height:12.5px;color:#ececec;font-weight:400;transform:scale(0.9500,1.0000);">-61,00 %</div>
<svg style="position:absolute;left:13px;top:827px" width="16" height="16" viewBox="0 0 16 16"><rect x="0.8" y="0.8" width="14.4" height="14.4" rx="2" fill="none" stroke="#0a9fd4" stroke-width="1.6"/></svg>
<svg style="position:absolute;left:39px;top:827px" width="6" height="16" viewBox="0 0 6 16"><circle cx="3.05" cy="4.4" r="1.35" fill="#f2f2f2"/><circle cx="3.05" cy="8.3" r="1.35" fill="#f2f2f2"/><circle cx="3.05" cy="12.2" r="1.35" fill="#f2f2f2"/></svg>
<div class="t" style="left:102px;transform-origin:left 10px;top:830.00px;font-size:12.5px;line-height:12.5px;color:#ececec;font-weight:400;transform:scale(0.9500,1.0000);">HK0669013440</div>
<div class="t" style="left:341px;transform-origin:left 10px;top:830.00px;font-size:12.5px;line-height:12.5px;color:#ececec;font-weight:400;transform:scale(0.9050,1.0000);">TECHTRONIC I.SUBD.</div>
<div class="t" style="left:740.5px;transform-origin:left 10px;top:830.00px;font-size:12.5px;line-height:12.5px;color:#ececec;font-weight:400;transform:scale(0.8800,1.0000);">EUR</div>
<div class="t" style="left:820px;transform-origin:left 10px;top:830.00px;font-size:12.5px;line-height:12.5px;color:#ececec;font-weight:400;transform:scale(0.8600,1.0000);">FSE</div>
<div class="t" style="left:1112.92px;transform-origin:right 10px;top:830.00px;font-size:12.5px;line-height:12.5px;color:#ececec;font-weight:400;transform:scale(0.9500,1.0000);">12,41</div>
<div class="t" style="left:1158.5px;transform-origin:left 10px;top:830.00px;font-size:12.5px;line-height:12.5px;color:#ececec;font-weight:400;transform:scale(0.9400,1.0000);">09:17:47</div>
<div class="t" style="left:1365.08px;transform-origin:right 10px;top:830.00px;font-size:12.5px;line-height:12.5px;color:#ececec;font-weight:400;transform:scale(0.9500,1.0000);">1,10 %</div>
<div class="t" style="left:1636.05px;transform-origin:right 10px;top:830.00px;font-size:12.5px;line-height:12.5px;color:#ececec;font-weight:400;transform:scale(0.9500,1.0000);">0</div>
<div class="t" style="left:1832.27px;transform-origin:right 10px;top:830.00px;font-size:12.5px;line-height:12.5px;color:#ececec;font-weight:400;transform:scale(0.9500,1.0000);">-16,66 %</div>
</body></html>
